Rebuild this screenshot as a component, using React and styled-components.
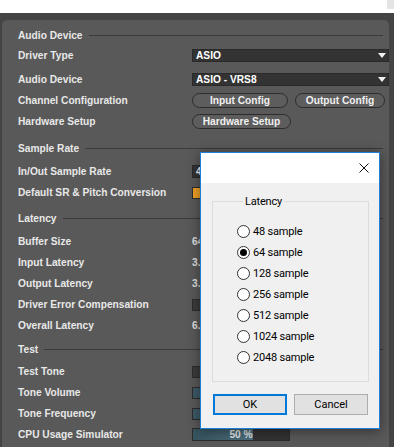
import React, { useState } from 'react'
import styled, { createGlobalStyle } from 'styled-components'

const GlobalStyle = createGlobalStyle`
  body {
    margin: 0;
    background: #ffffff;
    font-family: "Liberation Sans", Arial, sans-serif;
  }
`

const latencies = [48, 64, 128, 256, 512, 1024, 2048]

export default function App() {
  const [latency, setLatency] = useState(64)
  return (
    <>
      <GlobalStyle />
      <Page>
        <TopStrip>
          <Thumb />
        </TopStrip>
        <Frame>
          <Panel>
            <SectionHead>Audio Device</SectionHead>
            <Row>
              <Label>Driver Type</Label>
              <Value>
                <Select>ASIO<Arrow /></Select>
              </Value>
            </Row>
            <Row $mt={3}>
              <Label>Audio Device</Label>
              <Value>
                <Select>ASIO - VRS8<Arrow /></Select>
              </Value>
            </Row>
            <Row>
              <Label>Channel Configuration</Label>
              <Value>
                <Pill $w={96}>Input Config</Pill>
                <Pill $w={90}>Output Config</Pill>
              </Value>
            </Row>
            <Row>
              <Label>Hardware Setup</Label>
              <Value>
                <Pill $w={99}>Hardware Setup</Pill>
              </Value>
            </Row>

            <SectionHead $mt={6}>Sample Rate</SectionHead>
            <Row $mt={3}>
              <Label>In/Out Sample Rate</Label>
              <Value>
                <Select $w={96}>48000<Arrow /></Select>
              </Value>
            </Row>
            <Row>
              <Label>Default SR &amp; Pitch Conversion</Label>
              <Value>
                <Toggle $on>On</Toggle>
              </Value>
            </Row>

            <SectionHead $mt={5}>Latency</SectionHead>
            <Row $mt={3}>
              <Label>Buffer Size</Label>
              <Value>64 Samples</Value>
            </Row>
            <Row>
              <Label>Input Latency</Label>
              <Value>3.33 ms</Value>
            </Row>
            <Row>
              <Label>Output Latency</Label>
              <Value>3.33 ms</Value>
            </Row>
            <Row>
              <Label>Driver Error Compensation</Label>
              <Value>
                <Toggle>0.00 ms</Toggle>
              </Value>
            </Row>
            <Row>
              <Label>Overall Latency</Label>
              <Value>6.67 ms</Value>
            </Row>

            <SectionHead $mt={3}>Test</SectionHead>
            <Row $mt={2}>
              <Label>Test Tone</Label>
              <Value>
                <Toggle>Off</Toggle>
              </Value>
            </Row>
            <Row>
              <Label>Tone Volume</Label>
              <Value>
                <Slider>-36 dB</Slider>
              </Value>
            </Row>
            <Row>
              <Label>Tone Frequency</Label>
              <Value>
                <Slider>440 Hz</Slider>
              </Value>
            </Row>
            <Row>
              <Label>CPU Usage Simulator</Label>
              <Value>
                <Meter>
                  <MeterFill style={{ width: '63%' }} />
                  <MeterText>50 %</MeterText>
                </Meter>
              </Value>
            </Row>
          </Panel>
        </Frame>

        <Dialog>
          <TitleBar>
            <svg width="10" height="10" viewBox="0 0 10 10">
              <path d="M0.5 0.5 L9.5 9.5 M9.5 0.5 L0.5 9.5" stroke="#111" strokeWidth="1" />
            </svg>
          </TitleBar>
          <DialogBody>
            <Group>
              <Legend>Latency</Legend>
              {latencies.map(n => (
                <RadioRow key={n} onClick={() => setLatency(n)}>
                  <RadioDot $checked={latency === n} />
                  {n} sample
                </RadioRow>
              ))}
            </Group>
            <ButtonRow>
              <WinButton $default>OK</WinButton>
              <WinButton>Cancel</WinButton>
            </ButtonRow>
          </DialogBody>
        </Dialog>
      </Page>
    </>
  )
}

const Page = styled.div`
  position: relative;
  width: 394px;
  height: 447px;
  overflow: hidden;
  display: flex;
  flex-direction: column;
  background: #ffffff;
`

const TopStrip = styled.div`
  height: 13px;
  display: flex;
  justify-content: flex-end;
`

const Thumb = styled.div`
  width: 7px;
  height: 9px;
  background: #e4e4e4;
`

const Frame = styled.div`
  flex: 1;
  display: flex;
  background: #444444;
  padding: 7px 5px 0 2px;
`

const Panel = styled.div`
  flex: 1;
  background: #595959;
  border-radius: 5px 5px 0 0;
  padding: 5px 0 0 16px;
  color: #e8e8e8;
  font-size: 10.2px;
  font-weight: 700;
`

const SectionHead = styled.div`
  display: flex;
  align-items: center;
  gap: 6px;
  height: 20px;
  margin-top: ${p => p.$mt || 0}px;
  margin-right: 6px;
  &::after {
    content: "";
    flex: 1;
    height: 1px;
    background: #3a3a3a;
  }
`

const Row = styled.div`
  display: flex;
  align-items: center;
  height: 21px;
  margin-top: ${p => p.$mt || 0}px;
`

const Label = styled.div`
  width: 174px;
  flex-shrink: 0;
`

const Value = styled.div`
  flex: 1;
  display: flex;
  align-items: center;
  gap: 7px;
  color: #e0e0e0;
`

const Select = styled.div`
  box-sizing: border-box;
  ${p => (p.$w ? `width: ${p.$w}px;` : 'flex: 1;')}
  height: 13px;
  display: flex;
  align-items: center;
  justify-content: space-between;
  padding: 0 2px 0 3px;
  background: #333333;
  border: 1px solid #2a2a2a;
  color: #ffffff;
`

const Arrow = styled.span`
  width: 0;
  height: 0;
  border-left: 4px solid transparent;
  border-right: 4px solid transparent;
  border-top: 5px solid #f0f0f0;
`

const Pill = styled.div`
  box-sizing: border-box;
  width: ${p => p.$w}px;
  height: 15px;
  display: flex;
  align-items: center;
  justify-content: center;
  border: 1px solid #2c2c2c;
  border-radius: 8px;
  background: #5d5d5d;
  color: #f0f0f0;
`

const Toggle = styled.div`
  box-sizing: border-box;
  width: 70px;
  height: 12px;
  display: flex;
  align-items: center;
  justify-content: center;
  background: ${p => (p.$on ? '#f0a326' : '#3c3c3c')};
  border: 1px solid #2c2c2c;
  color: ${p => (p.$on ? '#1f1f1f' : '#dddddd')};
`

const Slider = styled.div`
  box-sizing: border-box;
  width: 70px;
  height: 12px;
  display: flex;
  align-items: center;
  justify-content: center;
  background: #3d5b68;
  border: 1px solid #2c2c2c;
`

const Meter = styled.div`
  position: relative;
  box-sizing: border-box;
  width: 98px;
  height: 13px;
  background: #333333;
  border: 1px solid #2c2c2c;
  display: flex;
  align-items: center;
  justify-content: center;
`

const MeterFill = styled.div`
  position: absolute;
  left: 0;
  top: 0;
  bottom: 0;
  background: linear-gradient(90deg, #36535f 0%, #4d717f 100%);
`

const MeterText = styled.span`
  position: relative;
  color: #e8e8e8;
`

const Dialog = styled.div`
  position: absolute;
  left: 200px;
  top: 152px;
  width: 180px;
  height: 277px;
  box-sizing: border-box;
  display: flex;
  flex-direction: column;
  background: #f0f0f0;
  border: 1px solid #1c80d8;
  box-shadow: 0 2px 12px rgba(0, 0, 0, 0.45);
  font-family: Roboto, "Liberation Sans", sans-serif;
  font-size: 11px;
  letter-spacing: -0.2px;
  color: #000000;
`

const TitleBar = styled.div`
  height: 30px;
  display: flex;
  align-items: center;
  justify-content: flex-end;
  padding-right: 10px;
  background: #ffffff;
`

const DialogBody = styled.div`
  flex: 1;
  padding: 12px 10px 0 11px;
`

const Group = styled.fieldset`
  margin: 0;
  height: 187px;
  box-sizing: border-box;
  padding: 13px 0 0 24px;
  border: 1px solid #dcdcdc;
  display: flex;
  flex-direction: column;
`

const Legend = styled.legend`
  margin-left: 6px;
  padding: 0 2px;
  line-height: 13px;
`

const RadioRow = styled.label`
  display: flex;
  align-items: center;
  gap: 3px;
  height: 21px;
  cursor: default;
`

const RadioDot = styled.span`
  box-sizing: border-box;
  width: 13px;
  height: 13px;
  border-radius: 50%;
  border: 1px solid #333333;
  background: #ffffff;
  display: flex;
  align-items: center;
  justify-content: center;
  &::after {
    content: "";
    width: 7px;
    height: 7px;
    border-radius: 50%;
    background: ${p => (p.$checked ? '#000000' : 'transparent')};
  }
`

const ButtonRow = styled.div`
  display: flex;
  gap: 7px;
  margin: 12px 1px 0 1px;
`

const WinButton = styled.button`
  box-sizing: border-box;
  width: 74px;
  height: 21px;
  padding: 0;
  font: inherit;
  color: #000000;
  background: #e1e1e1;
  border: ${p => (p.$default ? '2px solid #0078d7' : '1px solid #adadad')};
`
